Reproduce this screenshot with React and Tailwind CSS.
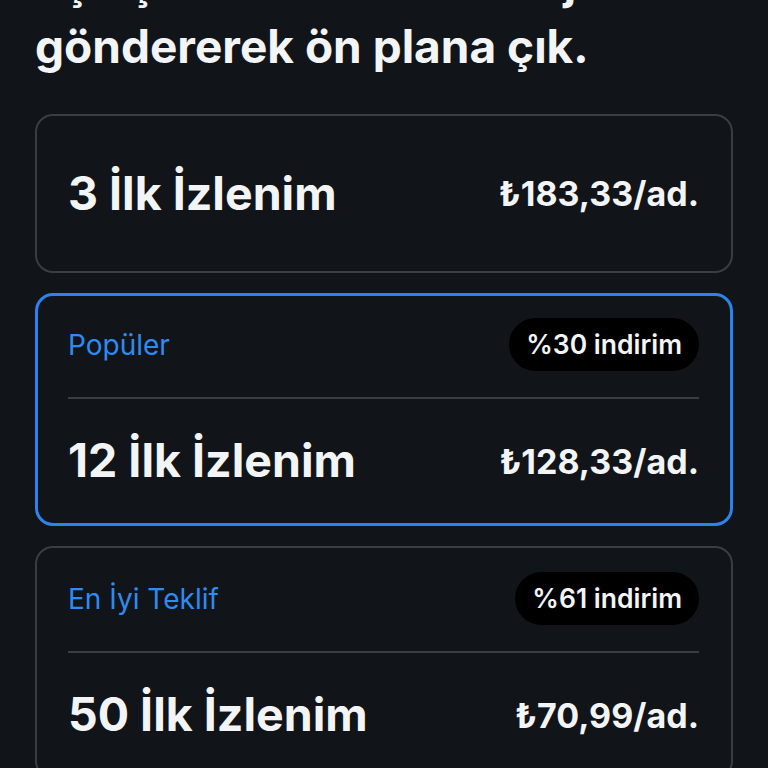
export default function App() {
  return (
    <div className="h-[768px] overflow-hidden bg-[#111418] px-[35px] text-[#f3f4f6] font-['Inter',_'Noto_Sans',_sans-serif]">
      <h1 className="-mt-[50px] text-[46px] font-bold leading-[64px] text-[#f3f4f6]">
        Eşleşmeden önce mesaj
        <br />
        göndererek ön plana çık.
      </h1>
      <div className="mt-[36px] flex flex-col gap-5">
        <div className="flex h-[159px] items-center justify-between rounded-[18px] border-2 border-[#3a3d43] pl-[31px] pr-[32px]">
          <span className="text-[46.5px] font-bold">3 İlk İzlenim</span>
          <span className="text-[34px] font-bold">₺183,33/ad.</span>
        </div>
        <div className="flex h-[233px] flex-col rounded-[18px] border-[3px] border-[#2b84ee] pl-[30px] pr-[31px] pt-[22px]">
          <div className="flex items-center justify-between">
            <span className="text-[28px] text-[#2f8bf0]">Popüler</span>
            <span className="flex h-[53px] items-center rounded-full bg-black px-[17px] text-[26.5px] font-semibold">%30 indirim</span>
          </div>
          <div className="mt-[26px] h-[2px] bg-[#3a3d43]" />
          <div className="flex flex-1 items-center justify-between">
            <span className="text-[46.5px] font-bold">12 İlk İzlenim</span>
            <span className="text-[34px] font-bold">₺128,33/ad.</span>
          </div>
        </div>
        <div className="flex h-[233px] flex-col rounded-[18px] border-2 border-[#3a3d43] pl-[31px] pr-[32px] pt-[24px]">
          <div className="flex items-center justify-between">
            <span className="text-[28px] text-[#2f8bf0]">En İyi Teklif</span>
            <span className="flex h-[53px] items-center rounded-full bg-black px-[17px] text-[26.5px] font-semibold">%61 indirim</span>
          </div>
          <div className="mt-[26px] h-[2px] bg-[#3a3d43]" />
          <div className="flex flex-1 items-center justify-between">
            <span className="text-[46.5px] font-bold">50 İlk İzlenim</span>
            <span className="text-[34px] font-bold">₺70,99/ad.</span>
          </div>
        </div>
      </div>
    </div>
  );
}
